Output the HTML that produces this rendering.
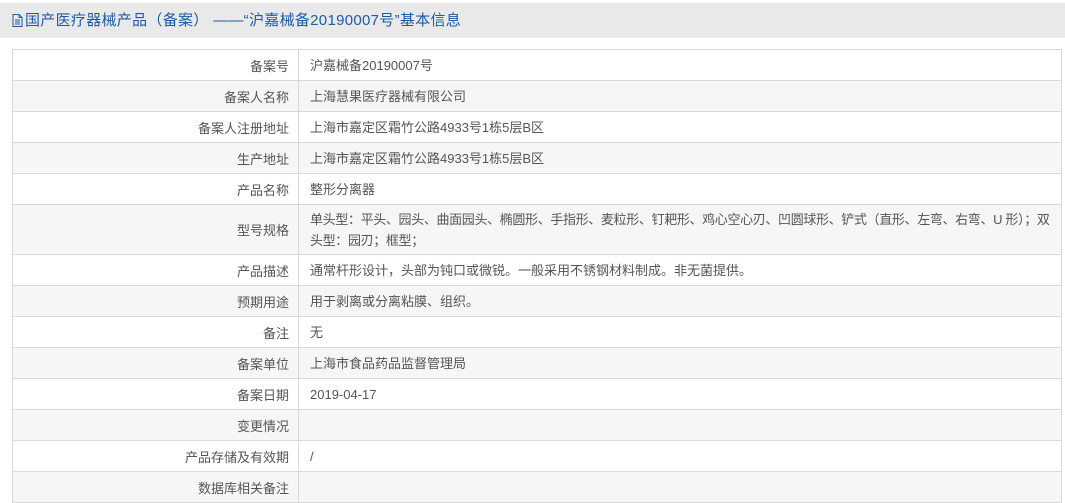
<!DOCTYPE html>
<html><head><meta charset="utf-8"><style>
body{margin:0;background:#fff;width:1065px;height:497px;overflow:hidden;font-family:"Liberation Sans","Noto Sans CJK SC",sans-serif;}
.hd{position:absolute;left:0;top:3px;width:1065px;height:35px;background:#e9e9e9;color:#1c5ba8;font-size:15px;line-height:35px;padding-left:12px;box-sizing:border-box;white-space:nowrap;letter-spacing:0.3px;}
table{position:absolute;left:12px;top:49px;width:1050px;border-collapse:collapse;font-size:13px;color:#555;}
td{border:1px solid #d9d9d9;height:31px;padding:0;box-sizing:border-box;}
td.l{width:286px;text-align:right;padding-right:9px;}
td.v{padding-left:11px;padding-right:2px;line-height:21px;}
tr:nth-child(even) td{background:#f6f6f6;}
</style></head><body>
<div class="hd"><svg width="11" height="13" viewBox="0 0 11 13" style="vertical-align:-2px;margin-right:2px"><path d="M1 .5h6l3 3v9H1z M7 .5v3h3 M3 6h5M3 8h5M3 10h5" fill="none" stroke="#1c5ba8" stroke-width="1"/></svg>国产医疗器械产品（备案） ——“沪嘉械备20190007号”基本信息</div>
<table>
<tr><td class="l" style="height:30px">备案号</td><td class="v">沪嘉械备20190007号</td></tr>
<tr><td class="l">备案人名称</td><td class="v">上海慧果医疗器械有限公司</td></tr>
<tr><td class="l">备案人注册地址</td><td class="v">上海市嘉定区霜竹公路4933号1栋5层B区</td></tr>
<tr><td class="l">生产地址</td><td class="v">上海市嘉定区霜竹公路4933号1栋5层B区</td></tr>
<tr><td class="l">产品名称</td><td class="v">整形分离器</td></tr>
<tr><td class="l" style="height:50px">型号规格</td><td class="v" style="white-space:nowrap;letter-spacing:-0.35px">单头型：平头、园头、曲面园头、椭圆形、手指形、麦粒形、钉耙形、鸡心空心刃、凹圆球形、铲式（直形、左弯、右弯、U 形）；双<br>头型：园刃；框型；</td></tr>
<tr><td class="l">产品描述</td><td class="v">通常杆形设计，头部为钝口或微锐。一般采用不锈钢材料制成。非无菌提供。</td></tr>
<tr><td class="l">预期用途</td><td class="v">用于剥离或分离粘膜、组织。</td></tr>
<tr><td class="l">备注</td><td class="v">无</td></tr>
<tr><td class="l">备案单位</td><td class="v">上海市食品药品监督管理局</td></tr>
<tr><td class="l">备案日期</td><td class="v">2019-04-17</td></tr>
<tr><td class="l">变更情况</td><td class="v"></td></tr>
<tr><td class="l">产品存储及有效期</td><td class="v">/</td></tr>
<tr><td class="l">数据库相关备注</td><td class="v"></td></tr>
</table>
</body></html>
